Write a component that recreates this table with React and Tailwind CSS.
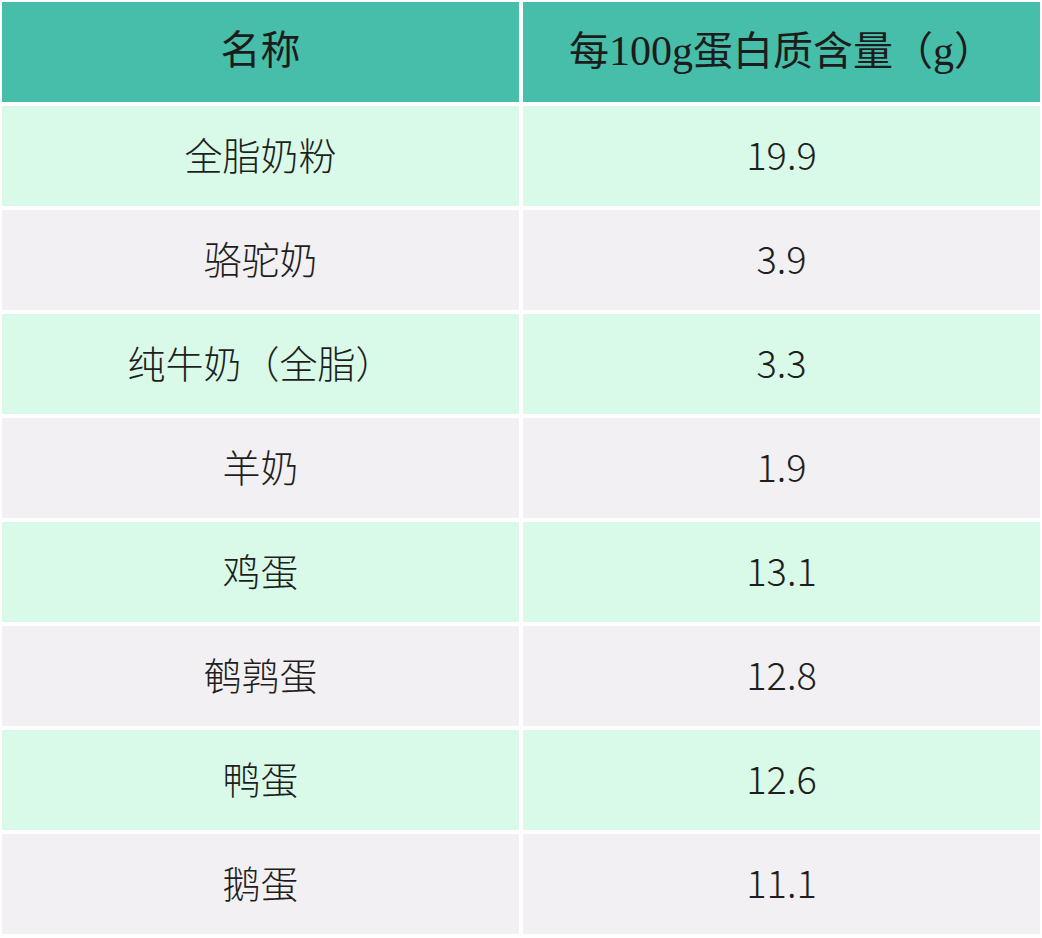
import React from "react";

const rows = [
  ["全脂奶粉", "19.9"],
  ["骆驼奶", "3.9"],
  ["纯牛奶（全脂）", "3.3"],
  ["羊奶", "1.9"],
  ["鸡蛋", "13.1"],
  ["鹌鹑蛋", "12.8"],
  ["鸭蛋", "12.6"],
  ["鹅蛋", "11.1"],
];

export default function App() {
  return (
    <div className="w-[1042px] h-[938px] bg-white p-[2px] font-['Noto_Sans_CJK_SC',sans-serif]">
      <div className="grid grid-cols-2 gap-[4px]">
        <div className="h-[100px] bg-[#47bea9] flex items-center justify-center pb-[2px] text-[40px] font-normal text-[#1c1c1c] font-['Liberation_Serif','Noto_Sans_CJK_SC',serif]">
          名称
        </div>
        <div className="h-[100px] bg-[#47bea9] flex items-center justify-center pb-[2px] text-[40px] font-normal text-[#1c1c1c] font-['Liberation_Serif','Noto_Sans_CJK_SC',serif]">
          <span>
            每<span className="text-[42px]">100g</span>蛋白质含量（<span className="text-[42px]">g</span>）
          </span>
        </div>
        {rows.map(([name, val], i) => {
          const bg = i % 2 === 0 ? "bg-[#d9fae8]" : "bg-[#f2f0f3]";
          return (
            <React.Fragment key={name}>
              <div className={`h-[100px] ${bg} flex items-center justify-center pb-[5px] text-[38px] font-light text-[#1e1e1e]`}>
                {name}
              </div>
              <div className={`h-[100px] ${bg} flex items-center justify-center pb-[5px] text-[38px] font-light text-[#1e1e1e]`}>
                {val}
              </div>
            </React.Fragment>
          );
        })}
      </div>
    </div>
  );
}
